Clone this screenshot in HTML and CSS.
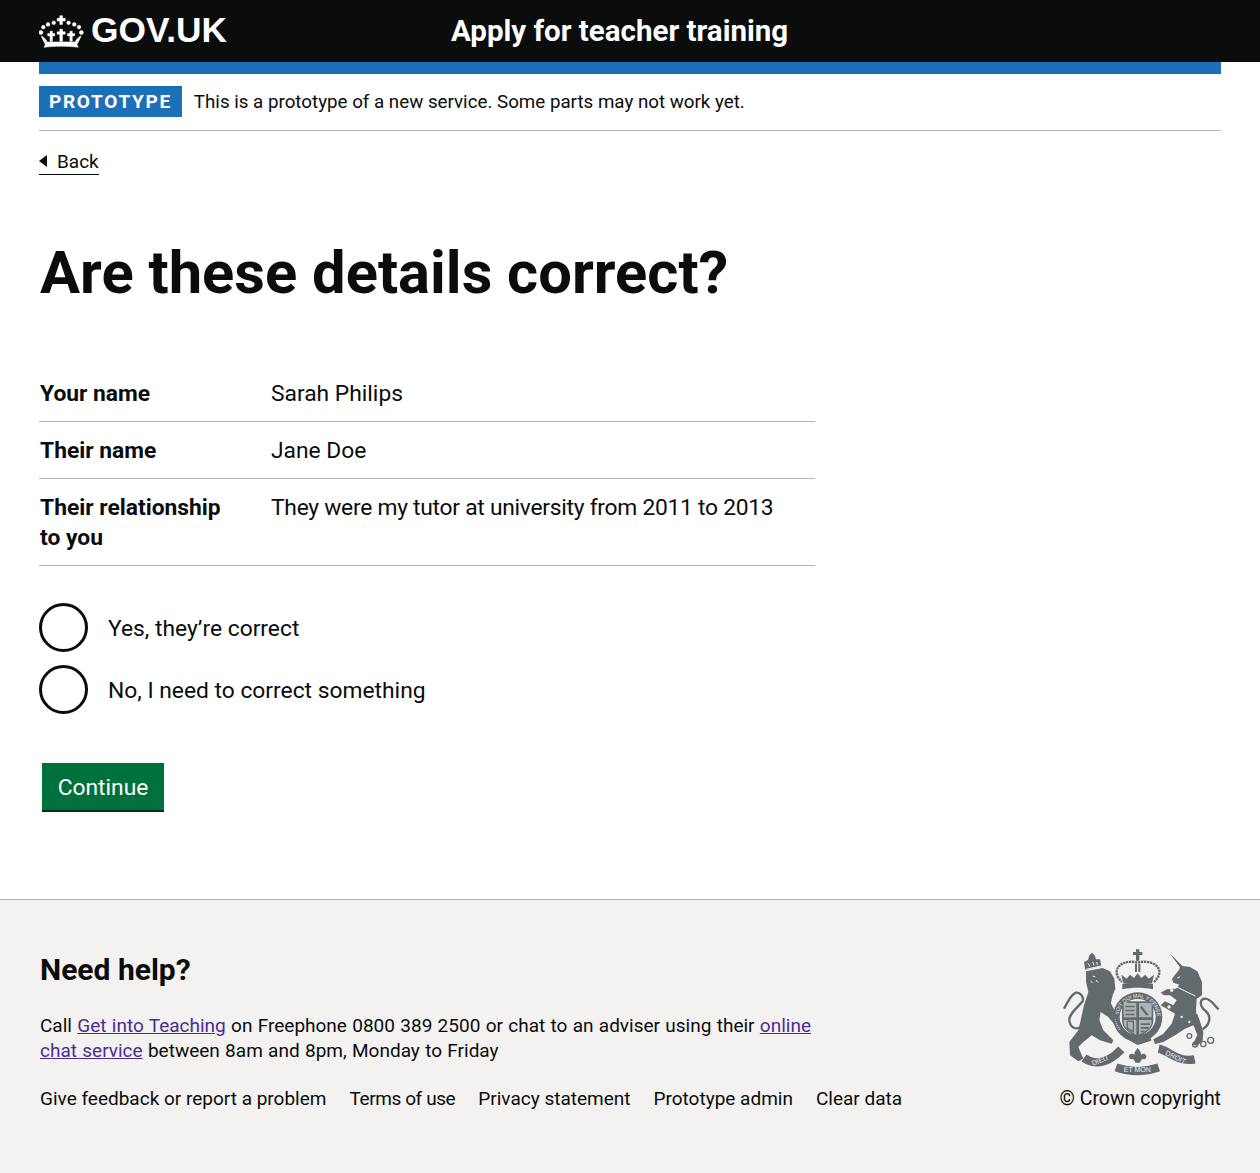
FILE: index.html
```html
<!DOCTYPE html>
<html lang="en">

<head>
	<meta charset="UTF-8">
	<meta name="viewport" content="width=device-width, initial-scale=1.0">
	<title>Are these details correct? - Apply for teacher training</title>
	<link rel="stylesheet" href="styles.css">
</head>

<body>

	<!-- Header -->
	<header class="site-header">
		<a class="logo" href="#">
			<svg class="crown" viewBox="10 8 132 98" aria-hidden="true">
				<g fill="#fff" stroke="#fff" stroke-width="1.500">
					<path d="M71 10h8v8h8v8h-8v10h-8v-10h-8v-8h8z"/>
					<circle cx="53" cy="31" r="5.500"/>
					<circle cx="97" cy="31" r="5.500"/>
					<circle cx="36" cy="36" r="5.500"/>
					<circle cx="114" cy="36" r="5.500"/>
					<circle cx="22" cy="44" r="5.500"/>
					<circle cx="128" cy="44" r="5.500"/>
					<circle cx="15" cy="60" r="6"/>
					<circle cx="135" cy="60" r="6"/>
					<path d="M71 50h8v8h8v7h-8v21h-8v-21h-8v-7h8z"/>
					<path d="M42 56h7v7h7v7h-7v16h-7v-16h-7v-7h7z"/>
					<path d="M101 56h7v7h7v7h-7v16h-7v-16h-7v-7h7z"/>
					<path d="M16 70c8 4 12 8 17 16h-5l2 2H120l2-2h-5c5-8 9-12 17-16-4 12-10 20-12 26l4 8c-28-4-72-4-102 0l4-8c-2-6-8-14-12-26z"/>
				</g>
			</svg>
			<span class="logo-text">GOV.UK</span>
		</a>
		<a class="service-name" href="#">Apply for teacher training</a>
	</header>

	<div class="width-container">
		<div class="phase-banner">
			<strong class="phase-tag">PROTOTYPE</strong>
			<span>This is a prototype of a new service. Some parts may not work yet.</span>
		</div>

		<a class="back-link" href="#">Back</a>

		<main>
			<h1>Are these details correct?</h1>

			<dl class="summary-list">
				<div class="summary-row">
					<dt>Your name</dt>
					<dd>Sarah Philips</dd>
				</div>
				<div class="summary-row">
					<dt>Their name</dt>
					<dd>Jane Doe</dd>
				</div>
				<div class="summary-row">
					<dt>Their relationship to you</dt>
					<dd class="long-value">They were my tutor at university from 2011 to 2013</dd>
				</div>
			</dl>

			<form>
				<div class="radios">
					<label class="radio"><input type="radio" name="correct"><span>Yes, they’re correct</span></label>
					<label class="radio"><input type="radio" name="correct"><span>No, I need to correct something</span></label>
				</div>
				<button type="button" class="button">Continue</button>
			</form>
		</main>
	</div>

	<!-- Footer -->
	<footer class="site-footer">
		<div class="footer-inner">
			<div class="footer-main">
				<h2>Need help?</h2>
				<p class="help-text">Call <a href="#">Get into Teaching</a> on Freephone 0800 389 2500 or chat to an adviser using their <a href="#">online chat service</a> between 8am and 8pm, Monday to Friday</p>
				<ul class="footer-links">
					<li><a href="#">Give feedback or report a problem</a></li>
					<li class="terms-link"><a href="#">Terms of use</a></li>
					<li><a href="#">Privacy statement</a></li>
					<li><a href="#">Prototype admin</a></li>
					<li><a href="#">Clear data</a></li>
				</ul>
			</div>
			<div class="footer-meta">
				<svg class="crest" viewBox="60 35 480 390" aria-hidden="true">
					<defs>
						<path id="garter" d="M248.600 282.300A58 58 0 1 1 337.400 282.300"/>
					</defs>
					<!-- lion -->
					<g transform="translate(60 30)">
						<path class="ink" d="M78 78L128 68L150 78L163 100L166 130L158 150L150 185L160 205L178 232L165 240L145 215L122 200L118 225L130 255L160 285L155 295L120 285L95 270L70 290L55 305L70 340L55 348L30 330L28 290L55 255L62 225L72 180L85 140L78 110Z"/>
						<path class="ink" d="M72 50L84 44L88 30L96 22L104 30L108 42L120 42L124 62L76 74Z"/>
						<path class="gap" d="M84 54l6 10M98 50l4 10M110 50l2 8M78 72l44-10"/>
						<path class="gap" d="M98 92l8 2M108 104l6 8M92 108l6 4"/>
						<path class="line" d="M68 240C50 256 32 250 28 226C26 206 50 190 68 168C72 154 60 140 48 142C34 146 24 168 12 190"/>
					</g>
					<!-- main crown -->
					<g fill="#626a6e">
						<path d="M288 42h10v8h9v9h-9v17h-10v-17h-9v-9h9z"/>
						<path d="M285 86h6v24h-6zM295 86h6v24h-6z"/>
						<path d="M244 118l16 12 10-12 12 10 11-14 11 14 12-10 10 12 16-12-6 26h-86z"/>
						<path d="M247 146c28-6 64-6 92 0v16c-30-6-62-6-92 0z"/>
					</g>
					<path class="line dots" d="M292 82c-26-8-60 2-62 26-1 14 8 24 16 32M294 82c26-8 62 2 64 26 1 14-8 24-16 32"/>
					<!-- unicorn -->
					<g transform="translate(300 30)">
						<path class="ink" d="M88 22L127 62L150 65L172 78L186 110L186 150L170 160L168 195L178 222L190 260L188 285L172 302L158 298L172 268L160 240L135 250L105 270L70 290L45 296L40 282L70 265L95 235L105 205L80 190L62 180L75 168L100 180L110 165L90 150L72 150L62 142L80 132L108 130L118 118L100 112L96 100L118 72L120 66Z"/>
						<path class="gap" d="M108 124l58 28M112 98l8-4"/>
						<circle class="spot" cx="125" cy="215" r="3.500"/>
						<circle class="spot" cx="148" cy="230" r="3.500"/>
						<circle class="spot" cx="160" cy="248" r="3.500"/>
						<circle class="spot" cx="172" cy="202" r="4"/>
						<circle class="spot" cx="87" cy="185" r="5"/>
						<circle class="spot" cx="95" cy="135" r="5"/>
						<path class="line" d="M188 252C212 236 214 212 196 196C176 180 180 160 196 160C212 160 222 180 236 192"/>
						<g class="ring">
							<circle cx="148" cy="272" r="7"/>
							<circle cx="165" cy="298" r="7"/>
							<circle cx="190" cy="296" r="8"/>
							<circle cx="212" cy="285" r="9"/>
						</g>
					</g>
					<!-- garter and shield -->
					<circle cx="293" cy="245" r="74" fill="#626a6e"/>
					<circle cx="293" cy="245" r="54" fill="#f3f2f1"/>
					<path fill="#626a6e" d="M246 198h94v58c0 24-26 40-47 50-21-10-47-26-47-50z"/>
					<path fill="#aeb3b5" d="M251 203h38v43h-38zM297 203h38v43h-38zM297 254h38v8c0 10-12 24-38 36zM251 254h38v44c-26-12-38-26-38-36z"/>
					<path fill="#626a6e" d="M256 211h28v5h-28zM256 223h28v5h-28zM256 235h28v5h-28zM302 264h28v5h-28zM302 275h24v5h-24zM302 286h12v5h-12zM305 211l22 29h-9l-17-23z"/>
					<path d="M262 258v20l18 12v-32z" fill="none" stroke="#626a6e" stroke-width="4"/>
					<text class="garter-text" font-size="15.500" fill="#f3f2f1"><textPath href="#garter" startOffset="3">HONI SOIT QUI MAL Y PENSE</textPath></text>
					<path d="M205 198l52 106 36 20 40-12" fill="none" stroke="#626a6e" stroke-width="9"/>
					<!-- motto -->
					<g fill="none" stroke="#626a6e" stroke-width="25">
						<path d="M132 368C170 394 210 378 244 342"/>
						<path d="M356 340C388 346 412 382 464 372"/>
						<path d="M228 396C268 410 316 410 356 396"/>
					</g>
					<path fill="#626a6e" d="M293 338c6 8 10 12 10 20 8-6 18-2 16 8-2 6-8 8-12 4l-8 12h-12l-8-12c-4 4-10 2-12-4-2-10 8-14 16-8 0-8 4-12 10-20z"/>
					<g class="motto" fill="#f3f2f1" font-size="21" text-anchor="middle">
						<text x="182" y="382" transform="rotate(-22 182 382)">DIEU</text>
						<text x="404" y="372" transform="rotate(26 404 372)">DROIT</text>
						<text x="292" y="411">ET MON</text>
					</g>
				</svg>
				<span class="copyright">© Crown copyright</span>
			</div>
		</div>
	</footer>

</body>

</html>
```

FILE: styles.css
```css
* {
	box-sizing: border-box;
}

body {
	margin: 0;
	font-family: Roboto, Arial, sans-serif;
	font-size: 22.800px;
	line-height: 30px;
	color: #0b0c0c;
	background-color: #fff;
}

a {
	color: inherit;
	text-decoration: none;
}

.site-header {
	height: 62px;
	background-color: #0b0c0c;
	color: #fff;
	padding: 0 39px;
	display: flex;
	align-items: center;
}

.logo {
	display: flex;
	align-items: center;
	gap: 7px;
}

.crown {
	width: 45px;
	height: 33px;
}

.logo-text {
	font-family: "Liberation Sans", Arial, sans-serif;
	font-weight: 700;
	font-size: 35.300px;
	line-height: 36px;
	position: relative;
	top: -1px;
}

.service-name {
	margin-left: 224px;
	font-weight: 700;
	font-size: 29.500px;
}

.width-container {
	margin: 0 39px;
	border-top: 12px solid #1d70b8;
	min-height: 837px;
}

.phase-banner {
	display: flex;
	align-items: flex-start;
	gap: 12px;
	height: 57px;
	padding-top: 12px;
	border-bottom: 1px solid #b1b4b6;
	font-size: 18.750px;
	line-height: 33px;
}

.phase-tag {
	background-color: #1d70b8;
	color: #fff;
	height: 31px;
	line-height: 31px;
	padding: 0 10px;
	letter-spacing: 1.700px;
	font-size: 19px;
}

.back-link {
	display: inline-block;
	margin-top: 18px;
	font-size: 19px;
	line-height: 25px;
	padding-left: 18px;
	border-bottom: 1px solid #0b0c0c;
	position: relative;
}

.back-link::before {
	content: "";
	position: absolute;
	left: 0;
	top: 6px;
	border-style: solid;
	border-width: 6px 8px 6px 0;
	border-color: transparent #0b0c0c transparent transparent;
}

h1 {
	margin: 60px 0 54px 1px;
	font-size: 59.700px;
	line-height: 75px;
	font-weight: 700;
}

.summary-list {
	margin: 0;
	width: 776px;
}

.summary-row {
	display: flex;
	padding: 14px 0 12px;
	border-bottom: 1px solid #b1b4b6;
}

.summary-row dt {
	width: 232px;
	font-weight: 700;
	padding: 0 30px 0 1px;
}

.summary-row dd {
	margin: 0;
	flex: 1;
}

.summary-row .long-value {
	letter-spacing: -0.260px;
}

.radios {
	margin-top: 37px;
	display: flex;
	flex-direction: column;
	gap: 13px;
}

.radio {
	display: flex;
	align-items: center;
	gap: 20px;
	height: 49px;
}

.radio span {
	padding-top: 2px;
}

.radio input {
	appearance: none;
	margin: 0;
	width: 49px;
	height: 49px;
	border: 3px solid #0b0c0c;
	border-radius: 50%;
	background: #fff;
}

.button {
	display: block;
	margin: 49px 0 0 3px;
	padding: 2px 0 0;
	width: 122px;
	height: 49px;
	background-color: #00703c;
	color: #fff;
	border: none;
	border-bottom: 2px solid #002d18;
	font: inherit;
	cursor: pointer;
}

.site-footer {
	background-color: #f3f2f1;
	border-top: 1px solid #b1b4b6;
	height: 274px;
	padding: 0 39px 0 40px;
}

.footer-inner {
	display: flex;
	justify-content: space-between;
}

.footer-main {
	width: 775px;
}

.site-footer h2 {
	margin: 50px 0 23px;
	font-size: 30px;
	line-height: 40px;
	font-weight: 700;
}

.help-text {
	margin: 0;
	font-size: 19px;
	line-height: 25px;
	word-spacing: 0.600px;
}

.help-text a {
	color: #4c2c92;
	text-decoration: underline;
}

.footer-links {
	list-style: none;
	margin: 23px 0 0;
	padding: 0;
	display: flex;
	gap: 23px;
	font-size: 19px;
	line-height: 25px;
	white-space: nowrap;
}

.terms-link {
	letter-spacing: -0.400px;
}

.footer-meta {
	display: flex;
	flex-direction: column;
	align-items: center;
	font-size: 19.500px;
	line-height: 25px;
	padding-top: 47px;
}

.crest {
	width: 160px;
	height: 130px;
	margin-bottom: 9px;
}

.ink {
	fill: #626a6e;
}

.gap {
	fill: none;
	stroke: #f3f2f1;
	stroke-width: 3;
}

.line {
	fill: none;
	stroke: #626a6e;
	stroke-width: 7;
}

.dots {
	stroke-dasharray: 7 2;
}

.spot {
	fill: #f3f2f1;
}

.ring circle {
	fill: none;
	stroke: #626a6e;
	stroke-width: 4;
}

.garter-text,
.motto {
	font-family: "Liberation Sans", Arial, sans-serif;
}
```
